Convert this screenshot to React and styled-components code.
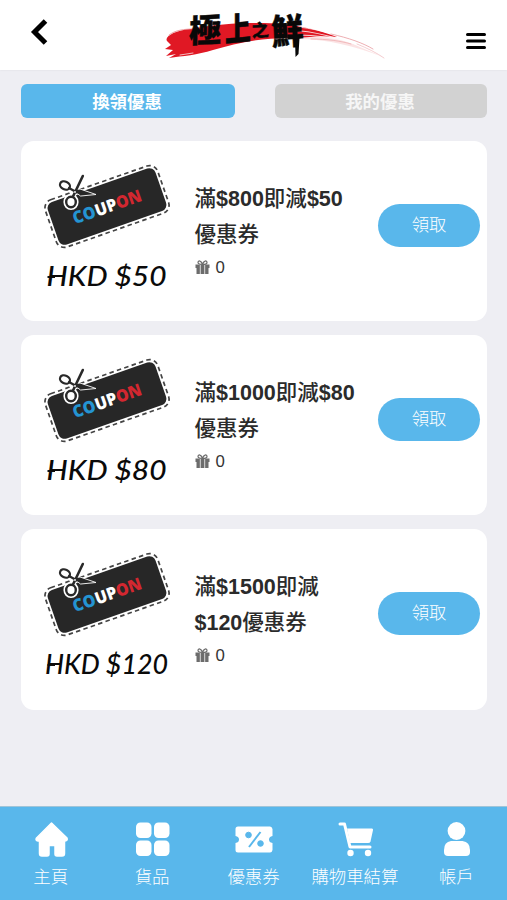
import { useState } from "react";
import styled, { createGlobalStyle } from "styled-components";

const BLUE = "#59b7eb";

const COUPONS = [
  { id: 1, title: ["滿$800即減$50", "優惠券"], value: "HKD $50", textWidth: 120, count: 0 },
  { id: 2, title: ["滿$1000即減$80", "優惠券"], value: "HKD $80", textWidth: 120, count: 0 },
  { id: 3, title: ["滿$1500即減", "$120優惠券"], value: "HKD $120", textWidth: 123, count: 0 },
];

const TABS = [
  { id: "redeem", label: "換領優惠" },
  { id: "mine", label: "我的優惠" },
];

const GlobalStyle = createGlobalStyle`
  * {
    box-sizing: border-box;
  }
  body {
    margin: 0;
    background: #eeeef3;
    font-family: "Liberation Sans", "Noto Sans CJK TC", sans-serif;
    color: #333;
  }
  button {
    font-family: inherit;
    border: none;
    padding: 0;
    cursor: pointer;
  }
`;

const Page = styled.div`
  display: flex;
  flex-direction: column;
  width: 100%;
  height: 900px;
  overflow: hidden;
`;

const Header = styled.header`
  display: grid;
  grid-template-columns: 60px 1fr 60px;
  height: 70px;
  background: #fff;
  box-shadow: 0 0 2px rgba(0, 0, 0, 0.08);
`;

const IconButton = styled.button`
  display: flex;
  justify-content: ${(p) => (p.$end ? "flex-end" : "flex-start")};
  align-items: flex-start;
  padding: ${(p) => (p.$end ? "32px 21px 0 0" : "18px 0 0 29px")};
  background: none;
`;

const LogoBox = styled.div`
  display: flex;
  justify-content: center;
  padding-left: 35px;
`;

const Tabs = styled.nav`
  display: grid;
  grid-template-columns: 214px 212px;
  justify-content: space-between;
  padding: 14px 20px 0 21px;
`;

const Tab = styled.button`
  height: 34px;
  padding: 0 2px 1px 0;
  border-radius: 6px;
  background: ${(p) => (p.$active ? BLUE : "#d2d2d2")};
  color: ${(p) => (p.$active ? "#fff" : "#f6f6f6")};
  font-size: 17.4px;
  font-weight: 700;
`;

const CouponList = styled.main`
  flex: 1;
  display: flex;
  flex-direction: column;
  gap: 14px;
  padding: 23px 20px 0 21px;
`;

const Card = styled.article`
  display: grid;
  grid-template-columns: 173.5px 1fr 102px;
  height: 180.2px;
  padding-right: 7px;
  border-radius: 13px;
  background: #fff;
`;

const Info = styled.div`
  padding-top: 39.5px;
`;

const Title = styled.h2`
  margin: 0;
  font-size: 21.5px;
  font-weight: 500;
  line-height: 36.5px;
  color: #2b2b2b;
  white-space: nowrap;
`;

const TitleLine = styled.div`
  display: flex;
`;

const Amount = styled.span`
  font-weight: 700;
`;

const Count = styled.div`
  display: flex;
  align-items: center;
  gap: 6px;
  height: 18px;
  margin-top: 5px;
  font-size: 16.8px;
`;

const ClaimButton = styled.button`
  height: 43px;
  margin-top: 63px;
  padding-bottom: 4px;
  border-radius: 22px;
  background: ${BLUE};
  color: #fff;
  font-size: 17.3px;
  font-weight: 300;
`;

const Footer = styled.footer`
  display: grid;
  grid-template-columns: repeat(5, 1fr);
  height: 94px;
  border-top: 1px solid #9fc4d8;
  background: ${BLUE};
`;

const NavItem = styled.a`
  display: flex;
  flex-direction: column;
  align-items: center;
  gap: 6px;
  padding-top: 14px;
  color: #fff;
  font-size: 17.4px;
  font-weight: 300;
  line-height: 26px;
  white-space: nowrap;
`;

const LogoText = styled.text`
  font-family: "Noto Sans CJK TC", sans-serif;
  font-weight: 900;
  fill: #080808;
  stroke: #080808;
  stroke-width: 0.4px;
  stroke-linejoin: round;
`;

const Logo = () => (
  <svg width="240" height="70" viewBox="0 0 240 70">
    <path
      d="M16 41 C13 37 24 30 40 29 C70 23 105 22 132 24 C152 26 170 31 186 37 C170 36 158 37 145 38 C112 37 86 43 62 50 C46 55 32 56 18 58 L25 54 L15 56 L22 50 L14 49 L20 45 Z"
      fill="#e01824"
    />
    <path
      d="M120 24 C155 24 190 38 232 57 C203 46 177 39 145 39 Z"
      fill="#e01824"
      opacity="0.12"
    />
    <g fill="none" strokeLinecap="round">
      <path d="M18 35 C24 30 34 29 42 29" stroke="#e77b80" strokeWidth="0.7" />
      <path d="M138 30 C165 31 190 39 216 48" stroke="#fff" strokeWidth="1.1" opacity="0.8" />
      <path d="M146 35 C168 35 185 38 204 43" stroke="#fff" strokeWidth="1.2" opacity="0.8" />
      <path d="M148 27 C172 30 193 37 210 43" stroke="#fff" strokeWidth="0.7" />
      <path d="M160 39 C176 39 190 41 200 44" stroke="#e99a9d" strokeWidth="0.6" />
      <path d="M180 34 C198 38 212 43 222 49" stroke="#e58b90" strokeWidth="0.7" />
      <path d="M206 44 C216 48 226 53 233 58" stroke="#edabb0" strokeWidth="0.6" />
      <path d="M29 55 L42 53" stroke="#fff" strokeWidth="0.7" />
    </g>
    <LogoText fontSize="32" transform="translate(38 43) rotate(-3) skewX(-4)">極</LogoText>
    <LogoText fontSize="26" transform="translate(74 42) rotate(-5) skewX(-5) scale(1 1.25)">上</LogoText>
    <LogoText fontSize="17" transform="translate(101 37) rotate(-4)">之</LogoText>
    <LogoText fontSize="32" transform="translate(121 45) rotate(-3) scale(1 1.1)">鮮</LogoText>
    <path d="M144 38 L148.500 38 L147.500 54 L144.500 57 Z" fill="#080808" />
  </svg>
);

const CouponArt = ({ value, textWidth }) => (
  <svg width="173" height="180" viewBox="0 0 173 180">
    <g transform="translate(86 65.500) rotate(-19.300)">
      <rect
        x="-59.500"
        y="-25"
        width="119"
        height="50"
        rx="8.500"
        fill="none"
        stroke="#444"
        strokeWidth="1.700"
        strokeDasharray="4.500 3.300"
      />
      <rect x="-57" y="-22.500" width="114" height="45" rx="6.500" fill="#272727" />
      <text
        y="6.300"
        textAnchor="middle"
        textLength="72"
        lengthAdjust="spacingAndGlyphs"
        fontFamily="Open Sans, sans-serif"
        fontSize="17"
        fontWeight="800"
      >
        <tspan fill="#2494d2">CO</tspan>
        <tspan fill="#fff">UP</tspan>
        <tspan fill="#d32730">ON</tspan>
      </text>
    </g>
    <g strokeLinecap="round" strokeLinejoin="round">
      <g fill="none" stroke="#fff">
        <ellipse cx="50" cy="61" rx="5.200" ry="5.700" strokeWidth="4.800" />
        <path d="M52 55 L61.800 35.500" strokeWidth="5" />
        <path d="M47 48 L55 52" strokeWidth="4.500" />
      </g>
      <path d="M52 49 L59 48 L75 53.500 L60 55 Z" fill="#272727" stroke="#fff" strokeWidth="0.900" />
      <g fill="none" stroke="#292929">
        <ellipse
          cx="44"
          cy="44.500"
          rx="5.200"
          ry="3.900"
          strokeWidth="2.200"
          transform="rotate(25 44 44.500)"
        />
        <ellipse cx="50" cy="61" rx="4.800" ry="5.300" strokeWidth="2.400" fill="#fff" />
        <path d="M48 47 L56 51.500" strokeWidth="2.200" />
        <path d="M52 55.500 L61.800 35" strokeWidth="2.600" />
      </g>
      <circle cx="54" cy="51" r="0.900" fill="#fff" />
    </g>
    <path d="M26.500 136 H34" stroke="#111" strokeWidth="2" />
    <text
      x={85.5 - textWidth / 2}
      y="145"
      textLength={textWidth}
      lengthAdjust="spacingAndGlyphs"
      fontFamily="Lato, sans-serif"
      fontSize="26"
      fontStyle="italic"
      fontWeight="500"
      fill="#0a0a0a"
    >
      {value}
    </text>
  </svg>
);

const GiftIcon = () => (
  <svg width="15" height="15" viewBox="0 0 15 15">
    <path d="M0.500 4.500 H14.500 V8 H0.500 Z M1.500 8 H13.500 V14 H1.500 Z" fill="#6c6c6c" />
    <path d="M5.300 5 V14 M9.700 5 V14" stroke="#e6e6e6" strokeWidth="0.900" />
    <path
      d="M7.500 4.500 C6.500 0.500 3 0 3 2.500 C3 4 5 4.500 7.500 4.500 C10 4.500 12 4 12 2.500 C12 0 8.500 0.500 7.500 4.500 Z"
      fill="none"
      stroke="#6c6c6c"
      strokeWidth="1.200"
    />
  </svg>
);

const HomeIcon = () => (
  <path
    d="M17.500 2 L33 17 Q34 19.500 31 20 H30.500 V32.500 Q30.500 35 28 35 H23 Q21 35 21 33 V24.500 H15 V33 Q15 35 13 35 H8 Q5.500 35 5.500 32.500 V20 H4 Q1 19.500 2.500 17 Z"
    stroke="#fff"
    strokeWidth="1.500"
    strokeLinejoin="round"
  />
);

const GridIcon = () => (
  <>
    <rect x="1" y="1.500" width="15.500" height="15.500" rx="4.500" />
    <rect x="19" y="1.500" width="15.500" height="15.500" rx="4.500" />
    <rect x="1" y="19.500" width="15.500" height="15.500" rx="4.500" />
    <rect x="19" y="19.500" width="15.500" height="15.500" rx="4.500" />
  </>
);

const TicketIcon = () => (
  <>
    <path d="M2 5.500 H34 Q36 5.500 36.500 8 V15 Q33 15.500 33 18.500 Q33 21.500 36.500 22 V29 Q36 31.500 34 31.500 H2 Q-0.500 31.500 -0.500 29 V22 Q3 21.500 3 18.500 Q3 15.500 -0.500 15 V8 Q-0.500 5.500 2 5.500 Z" />
    <g fill={BLUE} stroke={BLUE}>
      <circle cx="12.500" cy="14" r="2.800" />
      <circle cx="24.500" cy="22.500" r="2.800" />
      <path d="M24.500 11 L13 26" strokeWidth="2" />
    </g>
  </>
);

const CartIcon = () => (
  <>
    <path d="M9 7.500 H34 Q35.300 7.500 35 9 L32.500 20.500 Q32 22 30 22 H12 Z" />
    <path
      d="M2 3 H6.500 L12 26 H32"
      fill="none"
      stroke="#fff"
      strokeWidth="3"
      strokeLinecap="round"
      strokeLinejoin="round"
    />
    <circle cx="12.500" cy="32" r="3.200" />
    <circle cx="30" cy="32" r="3.200" />
  </>
);

const UserIcon = () => (
  <>
    <circle cx="17.500" cy="10" r="8.900" />
    <path d="M12 20 H23.500 Q31 21 31 29 V31 Q31 35 27 35 H9 Q5 35 5 31 V29 Q5 21 12 20 Z" />
  </>
);

const NAV_ITEMS = [
  { label: "主頁", Icon: HomeIcon },
  { label: "貨品", Icon: GridIcon },
  { label: "優惠券", Icon: TicketIcon },
  { label: "購物車結算", Icon: CartIcon },
  { label: "帳戶", Icon: UserIcon },
];

// dollar amounts are set bolder than the characters around them
const renderAmounts = (line) =>
  line
    .split(/(\$\d+)/)
    .filter(Boolean)
    .map((part) =>
      part.startsWith("$") ? (
        <Amount key={part}>{part}</Amount>
      ) : (
        <span key={part}>{part}</span>
      ),
    );

const CouponCard = ({ coupon }) => (
  <Card>
    <CouponArt value={coupon.value} textWidth={coupon.textWidth} />
    <Info>
      <Title>
        {coupon.title.map((line) => (
          <TitleLine key={line}>{renderAmounts(line)}</TitleLine>
        ))}
      </Title>
      <Count>
        <GiftIcon />
        {coupon.count}
      </Count>
    </Info>
    <ClaimButton>領取</ClaimButton>
  </Card>
);

const App = () => {
  const [activeTab, setActiveTab] = useState("redeem");

  return (
    <Page>
      <GlobalStyle />
      <Header>
        <IconButton aria-label="Back">
          <svg width="20" height="28" viewBox="0 0 20 28">
            <path d="M16.500 3 L5.500 14 L16.500 25" fill="none" stroke="#000" strokeWidth="5" />
          </svg>
        </IconButton>
        <LogoBox>
          <Logo />
        </LogoBox>
        <IconButton $end aria-label="Menu">
          <svg width="20" height="18" viewBox="0 0 20 18">
            <path
              d="M1.500 2.500 H18.500 M1.500 9 H18.500 M1.500 15.500 H18.500"
              stroke="#000"
              strokeWidth="3"
              strokeLinecap="round"
            />
          </svg>
        </IconButton>
      </Header>
      <Tabs>
        {TABS.map((tab) => (
          <Tab
            key={tab.id}
            $active={tab.id === activeTab}
            onClick={() => setActiveTab(tab.id)}
          >
            {tab.label}
          </Tab>
        ))}
      </Tabs>
      <CouponList>
        {COUPONS.map((coupon) => (
          <CouponCard key={coupon.id} coupon={coupon} />
        ))}
      </CouponList>
      <Footer>
        {NAV_ITEMS.map(({ label, Icon }) => (
          <NavItem key={label}>
            <svg width="34" height="37" viewBox="0 0 34 37" fill="#fff" overflow="visible">
              <Icon />
            </svg>
            {label}
          </NavItem>
        ))}
      </Footer>
    </Page>
  );
};

export default App;
